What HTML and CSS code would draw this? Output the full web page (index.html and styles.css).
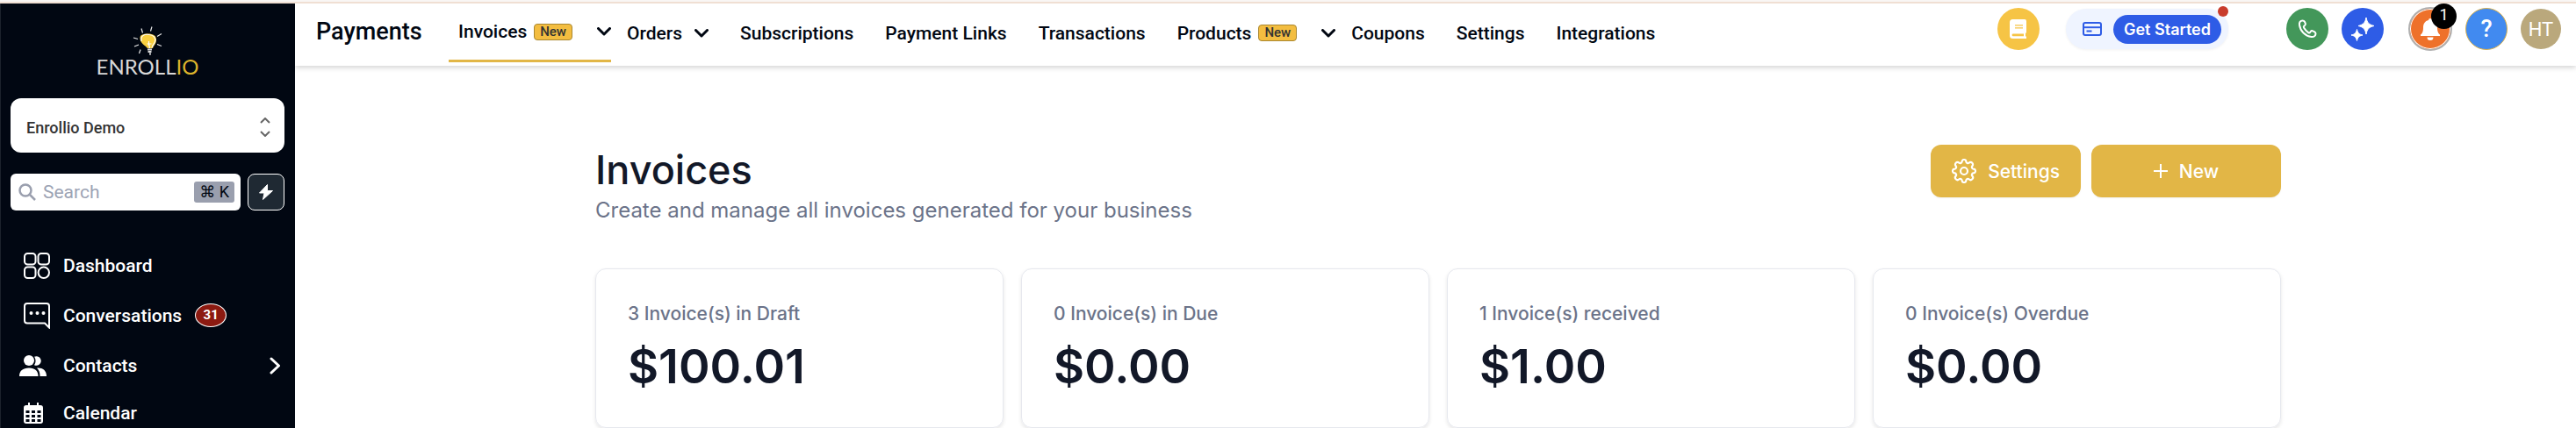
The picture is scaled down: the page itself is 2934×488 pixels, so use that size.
FILE: index.html
```
<!DOCTYPE html>
<html lang="en">
<head>
    <meta charset="UTF-8">
    <meta name="viewport" content="width=device-width, initial-scale=1.0">
    <title>Enrollio - Invoices</title>
    <link rel="stylesheet" href="styles.css">
</head>
<body>
    <div class="app">
        <!-- Sidebar -->
        <aside class="sidebar">
            <a href="#" class="logo">
                <svg class="logo-bulb" width="34" height="34" viewBox="0 0 34 34" fill="none">
                    <path d="M10 2.500l1.500 5M22 .5l-1.500 5M1 13l5 1.500M33 8.500l-5 3M2 23l5-2M33 22.500l-5-2M7.500 31l1.500-4.500" stroke="#e8e8e8" stroke-width="1.200"/>
                    <path d="M8.500 13c0-3 3-4.500 9-4.500 6 0 9.500 2 9.500 7s-3 6-4 9.500h-6c-2-3-8.500-5-8.500-12z" fill="#f8cf40"/>
                    <path d="M10 17c-1-6 3-8.500 9-7.500 5 .5 8 4 6.500 8-1 3-3 4-3.500 7M19.500 25l-1-6m-2 1h5m-3-3v5" stroke="#fff" stroke-width="1.200"/>
                    <path d="M17 26.500h5M17.500 29h4M19 31.500h2" stroke="#ddd" stroke-width="1.800"/>
                </svg>
                <span class="logo-text">ENROLL<span class="logo-gold">IO</span></span>
            </a>

            <button class="account">
                <span>Enrollio Demo</span>
                <svg width="12" height="22" viewBox="0 0 12 22" fill="none" stroke="#666" stroke-width="2"><path d="M1 6l5-5 5 5M1 16l5 5 5-5"/></svg>
            </button>

            <div class="search-row">
                <label class="search">
                    <svg width="20" height="20" viewBox="0 0 20 20" fill="none" stroke="#9a9fae" stroke-width="2.500"><circle cx="8" cy="8" r="6.500"/><path d="M12.500 12.500l6.500 6.500"/></svg>
                    <input type="text" placeholder="Search" aria-label="Search">
                    <kbd>⌘ K</kbd>
                </label>
                <button class="quick" aria-label="Quick actions">
                    <svg width="18" height="20" viewBox="0 0 18 20" fill="#fff" stroke="#fff" stroke-linejoin="round"><path d="M10.500 1.500L1.500 11h5.500l-1.500 7.500L16.500 8.500H10.500z"/></svg>
                </button>
            </div>

            <nav class="menu">
                <a href="#" class="menu-item">
                    <svg width="30" height="30" viewBox="0 0 30 30" fill="none" stroke="#fff" stroke-width="2"><rect x="1" y="1" width="12.500" height="12.500" rx="3.500"/><rect x="16.500" y="1" width="12.500" height="12.500" rx="3.500"/><rect x="1" y="16.500" width="12.500" height="12.500" rx="3.500"/><circle cx="22.800" cy="22.800" r="6.200"/></svg>
                    <span>Dashboard</span>
                </a>
                <a href="#" class="menu-item">
                    <svg width="30" height="30" viewBox="0 0 30 30" fill="none" stroke="#fff" stroke-width="2"><path d="M4 1h22a3 3 0 013 3v24.500l-5-5H4a3 3 0 01-3-3V4a3 3 0 013-3z"/><g fill="#fff" stroke="none"><circle cx="8.500" cy="12" r="2"/><circle cx="15.500" cy="12" r="2"/><circle cx="22.500" cy="12" r="2"/></g></svg>
                    <span>Conversations</span>
                    <span class="count">31</span>
                </a>
                <a href="#" class="menu-item">
                    <svg class="contacts-icon" width="32" height="24" viewBox="0 0 32 24" fill="#fff"><circle cx="11" cy="6" r="6"/><path d="M0 24c0-6 4-9.500 11-9.500S21.500 18 21.500 24zM17 1.800a5.300 5.300 0 110 9.400c2-3 2-6.500 0-9.400zM20 14.600c6-.6 11 2.400 11 9.400h-7.500c0-4-1-7-3.500-9.400z"/></svg>
                    <span>Contacts</span>
                    <svg class="menu-arrow" width="14" height="20" viewBox="0 0 14 20" fill="none" stroke="#fff" stroke-width="3" stroke-linecap="round" stroke-linejoin="round"><path d="M3 2l8.500 8L3 18"/></svg>
                </a>
                <a href="#" class="menu-item">
                    <svg class="calendar-icon" width="22" height="24" viewBox="0 0 22 24"><path d="M5 0h2v3h8V0h2v3h2a3 3 0 013 3v15a3 3 0 01-3 3H3a3 3 0 01-3-3V6a3 3 0 013-3h2z" fill="#fff"/><path d="M2.500 9h4v3h-4zM9 9h4v3H9zM15.500 9h4v3h-4zM2.500 14h4v3h-4zM9 14h4v3H9zM15.500 14h4v3h-4zM2.500 19h4v3h-4zM9 19h4v3H9zM15.500 19h4v3h-4z" fill="#010712"/></svg>
                    <span>Calendar</span>
                </a>
            </nav>
        </aside>

        <div class="page">
            <!-- Top bar -->
            <header class="topbar">
                <div class="topbar-title">Payments</div>
                <nav class="tabs">
                    <a href="#" class="tab tab-menu active">Invoices <span class="new">New</span>
                        <svg class="chevron" width="16" height="10" viewBox="0 0 16 10"><path d="M1.500 1.500L8 8l6.500-6.500"/></svg>
                    </a>
                    <a href="#" class="tab tab-orders">Orders
                        <svg class="chevron" width="16" height="10" viewBox="0 0 16 10"><path d="M1.500 1.500L8 8l6.500-6.500"/></svg>
                    </a>
                    <a href="#" class="tab">Subscriptions</a>
                    <a href="#" class="tab">Payment Links</a>
                    <a href="#" class="tab">Transactions</a>
                    <a href="#" class="tab tab-menu">Products <span class="new">New</span>
                        <svg class="chevron" width="16" height="10" viewBox="0 0 16 10"><path d="M1.500 1.500L8 8l6.500-6.500"/></svg>
                    </a>
                    <a href="#" class="tab">Coupons</a>
                    <a href="#" class="tab">Settings</a>
                    <a href="#" class="tab">Integrations</a>
                </nav>

                <div class="actions">
                    <button class="round book" aria-label="Guides">
                        <svg width="19" height="22" viewBox="0 0 19 22"><path d="M3.500 0H17a2 2 0 012 2v12.500a2 2 0 01-1 1.500v3.500h1V22H3.500A3.500 3.500 0 010 18.500v-15A3.500 3.500 0 013.500 0z" fill="#fff"/><path d="M6 6.800h9M6 9.800h9" stroke="#f6c445" stroke-width="1.200"/><path d="M4 16.500h12v2.800H4a1.400 1.400 0 010-2.800z" fill="#f6c445"/></svg>
                    </button>
                    <div class="started">
                        <svg width="22" height="16" viewBox="0 0 22 16" fill="none" stroke="#2e5ce6"><rect x="1" y="1" width="20" height="14" rx="2" stroke-width="2"/><path d="M1 6.200h20" stroke-width="2"/><path d="M4.500 10.500h6" stroke-width="2"/></svg>
                        <button class="started-btn">Get Started</button>
                        <span class="dot"></span>
                    </div>
                    <button class="round phone" aria-label="Call">
                        <svg width="24" height="24" viewBox="0 0 24 24" fill="none" stroke="#fff" stroke-width="2" stroke-linejoin="round"><path d="M6.500 2.500C4 2.500 2.500 4.500 3 7.500c1 7 6.500 12.500 13.500 13.500 3 .5 5-1.500 5-3.500 0-1-.3-1.700-1.200-2.200l-2-1c-1-.5-2-.2-2.600.7l-.6.8c-.5.7-1.300.8-2 .3C11.500 15 9.500 13 8 10.500c-.4-.7-.3-1.400.4-1.900l.6-.4c.9-.6 1.200-1.600.8-2.600l-.9-1.900c-.4-.8-1.300-1.200-2.400-1.200z"/></svg>
                    </button>
                    <button class="round sparkle" aria-label="AI assistant">
                        <svg width="28" height="28" viewBox="0 0 28 28" fill="#fff" stroke="#fff" stroke-linejoin="round"><path d="M18 1c1.200 6 3 8 9 9.500-6 1.500-7.800 3.500-9 9.500-1.200-6-3-8-9-9.500 6-1.500 7.800-3.500 9-9.500zM7.500 14.500c.9 4 2.200 5.500 6.500 6.500-4.300 1-5.600 2.500-6.500 6.500-.9-4-2.200-5.500-6.500-6.500 4.300-1 5.600-2.500 6.500-6.500z"/></svg>
                    </button>
                    <button class="round bell" aria-label="Notifications">
                        <svg width="22" height="25" viewBox="0 0 22 25" fill="#fff"><path d="M11 0a2 2 0 012 2c4 1 6 4 6 8 0 5 1 7 3 8.500V20H0v-1.500C2 17 3 15 3 10c0-4 2-7 6-8a2 2 0 012-2zM7.500 21.500h7a3.500 3.500 0 01-7 0z"/></svg>
                        <span class="bell-count">1</span>
                    </button>
                    <button class="round help" aria-label="Help">?</button>
                    <button class="round avatar">HT</button>
                </div>
            </header>

            <!-- Invoices -->
            <main class="content">
                <div class="heading">
                    <div>
                        <h1>Invoices</h1>
                        <p>Create and manage all invoices generated for your business</p>
                    </div>
                    <div class="heading-buttons">
                        <button class="btn">
                            <svg width="28" height="28" viewBox="0 0 28 28" fill="none" stroke="#fff" stroke-width="2.200" stroke-linejoin="round"><circle cx="14" cy="14" r="4"/><path d="M11.600 3.400a2.400 2.400 0 014.800 0 2 2 0 003.200 1.300 2.400 2.400 0 013.700 3.700 2 2 0 001.300 3.200 2.400 2.400 0 010 4.800 2 2 0 00-1.300 3.200 2.400 2.400 0 01-3.700 3.700 2 2 0 00-3.200 1.300 2.400 2.400 0 01-4.800 0 2 2 0 00-3.200-1.300 2.400 2.400 0 01-3.700-3.700 2 2 0 00-1.300-3.200 2.400 2.400 0 010-4.800 2 2 0 001.300-3.200 2.400 2.400 0 013.700-3.700 2 2 0 003.200-1.300z"/></svg>
                            Settings
                        </button>
                        <button class="btn btn-new">
                            <svg width="16" height="16" viewBox="0 0 16 16" stroke="#fff" stroke-width="2"><path d="M8 0v16M0 8h16"/></svg>
                            New
                        </button>
                    </div>
                </div>

                <div class="cards">
                    <div class="card">
                        <div class="card-label">3 Invoice(s) in Draft</div>
                        <div class="card-amount">$100.01</div>
                    </div>
                    <div class="card">
                        <div class="card-label">0 Invoice(s) in Due</div>
                        <div class="card-amount">$0.00</div>
                    </div>
                    <div class="card">
                        <div class="card-label">1 Invoice(s) received</div>
                        <div class="card-amount">$1.00</div>
                    </div>
                    <div class="card">
                        <div class="card-label">0 Invoice(s) Overdue</div>
                        <div class="card-amount">$0.00</div>
                    </div>
                </div>
            </main>
        </div>
    </div>
</body>
</html>
```
FILE: styles.css
```
* {
    margin: 0;
    padding: 0;
    box-sizing: border-box;
}

body {
    font-family: Roboto, sans-serif;
    background: white;
    border-top: 2px solid #f9f6f4;
    min-height: 100vh;
}

a {
    color: inherit;
    text-decoration: none;
}

button {
    font-family: inherit;
    border: none;
    cursor: pointer;
}

svg {
    flex-shrink: 0;
}

.app {
    display: flex;
    border-top: 2px solid #f0dfd3;
    height: calc(100vh - 2px);
    overflow: hidden;
}

/* Sidebar */
.sidebar {
    width: 336px;
    flex-shrink: 0;
    background: #010712;
    border-left: 1px solid #1c222c;
    padding: 26px 12px 0 11px;
    color: white;
    overflow: hidden;
}

.logo {
    display: flex;
    flex-direction: column;
    align-items: center;
    height: 82px;
}

.logo-text {
    font-family: Lato, sans-serif;
    font-size: 24px;
    line-height: 24px;
    color: #d8d8d8;
}

.logo-gold {
    color: #dcb32c;
}

.account {
    display: flex;
    justify-content: space-between;
    align-items: center;
    width: 100%;
    height: 62px;
    padding: 4px 16px 0 18px;
    background: white;
    border-radius: 12px;
    font-size: 18px;
    font-weight: 500;
    color: #333;
}

.search-row {
    display: flex;
    gap: 8px;
    margin-top: 24px;
}

.search {
    flex: 1;
    display: flex;
    align-items: center;
    gap: 8px;
    height: 42px;
    min-width: 0;
    padding: 0 7px 0 9px;
    background: white;
    border-radius: 6px;
}

.search input {
    flex: 1;
    min-width: 0;
    border: none;
    outline: none;
    font-family: inherit;
    font-size: 21px;
}

.search input::placeholder {
    color: #9ca3b4;
}

.search kbd {
    padding: 0 6px;
    background: #9a9fae;
    border-radius: 3px;
    color: #010712;
    font-family: Roboto, "DejaVu Sans", sans-serif;
    font-size: 18px;
    line-height: 24px;
}

.quick {
    display: flex;
    align-items: center;
    justify-content: center;
    width: 42px;
    height: 42px;
    background: #1f2933;
    border: 1px solid white;
    border-radius: 8px;
}

.menu {
    margin-top: 34px;
}

.menu-item {
    display: flex;
    align-items: center;
    height: 57px;
    padding: 0 4px 0 15px;
    gap: 15px;
    font-size: 21px;
    font-weight: 500;
}

.menu-item:last-child {
    height: 52px;
}

.contacts-icon {
    margin: 0 3px 0 -5px;
}

.calendar-icon {
    margin-right: 8px;
}

.menu-arrow {
    margin-left: auto;
}

.count {
    width: 36px;
    height: 27px;
    border: 1px solid white;
    border-radius: 50%;
    background: #8c1a11;
    font-size: 15px;
    font-weight: 700;
    line-height: 25px;
    text-align: center;
}

.page {
    flex: 1;
    min-width: 0;
}

/* Top bar */
.topbar {
    display: flex;
    height: 71px;
    padding: 0 17px 0 24px;
    background: white;
    box-shadow: 0 2px 6px rgba(0, 0, 0, 0.18);
    color: #010712;
}

.topbar-title {
    width: 151px;
    font-size: 27px;
    font-weight: 500;
    line-height: 64px;
}

.tabs {
    display: flex;
    font-size: 21px;
    font-weight: 500;
    line-height: 66px;
    white-space: nowrap;
}

.tab {
    display: flex;
    align-items: center;
    height: 67px;
    padding: 0 18px;
}

.tab-menu {
    padding-right: 0;
}

.tab.active {
    padding-left: 11px;
    border-bottom: 3px solid #e2b646;
}

.tab-orders .chevron {
    margin-left: 14px;
}

.new {
    margin-left: 8px;
    margin-right: 28px;
    padding: 0 6px;
    border: 1px solid #a98730;
    border-radius: 4px;
    background: #f3bd40;
    color: #333;
    font-size: 15px;
    line-height: 17px;
}

.chevron {
    fill: none;
    stroke: #010712;
    stroke-width: 3;
    stroke-linecap: round;
    stroke-linejoin: round;
}

.actions {
    display: flex;
    align-items: center;
    height: 58px;
    gap: 15px;
    margin-left: auto;
}

.round {
    position: relative;
    display: flex;
    align-items: center;
    justify-content: center;
    width: 48px;
    height: 48px;
    border-radius: 50%;
    color: white;
}

.book {
    background: #f6c445;
    margin-right: 15px;
}

.started {
    position: relative;
    display: flex;
    align-items: center;
    gap: 13px;
    height: 46px;
    padding: 0 8px 0 19px;
    margin-right: 51px;
    background: #eff4ff;
    border-radius: 23px;
    box-shadow: 0 1px 3px rgba(0, 0, 0, 0.06);
}

.started-btn {
    height: 33px;
    padding: 0 12px;
    background: #2e5ce6;
    border-radius: 17px;
    color: white;
    font-family: Inter, sans-serif;
    font-size: 18px;
    font-weight: 600;
}

.dot {
    position: absolute;
    top: -3px;
    right: 0;
    width: 12px;
    height: 12px;
    border-radius: 50%;
    background: #c93c2c;
}

.phone {
    background: #43975a;
}

.sparkle {
    background: #2e5ce6;
    margin-right: 13px;
}

.bell {
    width: 50px;
    height: 50px;
    background: #ee712b;
    border: 2px solid #b0b0b0;
    box-shadow: inset 0 0 0 1px white;
}

.bell-count {
    position: absolute;
    top: -6px;
    right: -7px;
    width: 29px;
    height: 29px;
    border-radius: 50%;
    background: black;
    font-size: 18px;
    line-height: 25px;
}

.help {
    background: #418af0;
    border: 1px solid #d8b04e;
    font-size: 27px;
    font-weight: 500;
}

.avatar {
    width: 46px;
    height: 46px;
    background: #baa87c;
    font-size: 22px;
}

/* Invoices */
.content {
    max-width: 1926px;
    margin: 0 auto;
    padding: 90px 0 0 6px;
    font-family: Inter, sans-serif;
}

.heading {
    display: flex;
    justify-content: space-between;
    align-items: flex-start;
    height: 141px;
}

.heading h1 {
    font-size: 45px;
    font-weight: 500;
    line-height: 57px;
    color: #121828;
}

.heading p {
    font-size: 24px;
    line-height: 36px;
    color: #6b7389;
}

.heading-buttons {
    display: flex;
    gap: 12px;
}

.btn {
    display: flex;
    align-items: center;
    justify-content: center;
    gap: 13px;
    height: 60px;
    padding: 0 24px;
    background: #e2b646;
    border-radius: 12px;
    box-shadow: 0 1px 2px rgba(0, 0, 0, 0.06);
    color: white;
    font-size: 21px;
    font-weight: 500;
}

.btn-new {
    width: 216px;
}

.cards {
    display: grid;
    grid-template-columns: repeat(4, 1fr);
    gap: 20px;
}

.card {
    height: 182px;
    padding: 35px 36px;
    border: 1px solid #e6e8ee;
    border-radius: 12px;
    box-shadow: 0 2px 4px rgba(0, 0, 0, 0.1);
}

.card-label {
    font-size: 21px;
    font-weight: 500;
    line-height: 32px;
    color: #6b7389;
}

.card-amount {
    margin-top: 8px;
    font-size: 54px;
    font-weight: 600;
    line-height: 72px;
    color: #121828;
}
```
